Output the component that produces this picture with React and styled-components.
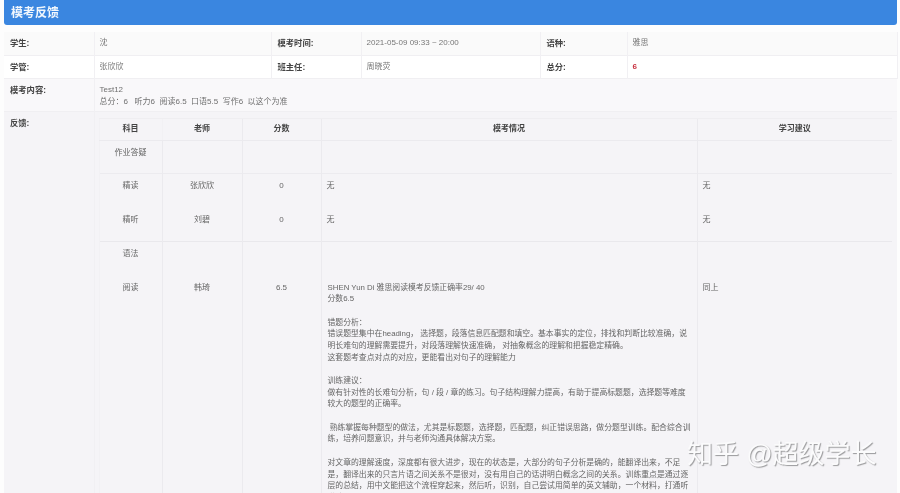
import React from 'react';
import styled, { createGlobalStyle } from 'styled-components';

const reportLines = [
    'SHEN Yun Di 雅思阅读模考反馈正确率29/ 40',
    '分数6.5',
    '',
    '错题分析：',
    '错误题型集中在heading， 选择题，段落信息匹配题和填空。基本事实的定位，排找和判断比较准确，说',
    '明长难句的理解需要提升，对段落理解快速准确， 对抽象概念的理解和把握稳定精确。',
    '这套题考查点对点的对应，更能看出对句子的理解能力',
    '',
    '训练建议：',
    '做有针对性的长难句分析，句 / 段 / 章的练习。句子结构理解力提高，有助于提高标题题，选择题等难度',
    '较大的题型的正确率。',
    '',
    ' 熟练掌握每种题型的做法，尤其是标题题，选择题，匹配题，纠正错误思路，做分题型训练。配合综合训',
    '练，培养问题意识，并与老师沟通具体解决方案。',
    '',
    '对文章的理解速度，深度都有很大进步，现在的状态是，大部分的句子分析是确的，能翻译出来，不足',
    '是，翻译出来的只言片语之间关系不是很对，没有用自己的话讲明白概念之间的关系。训练重点是通过逐',
    '层的总结，用中文能把这个流程穿起来，然后听，识别，自己尝试用简单的英文辅助，一个材料，打通听',
    '说读写。',
];

const rows = [
    { subject: '作业答疑', height: 33, line: '#ecebef' },
    { subject: '精读', teacher: '张欣欣', score: '0', report: '无', advice: '无', height: 34 },
    { subject: '精听', teacher: '刘碧', score: '0', report: '无', advice: '无', height: 34, line: '#e9e8ec' },
    { subject: '语法', height: 34 },
];

const App = () => {
    return (
        <Page>
            <GlobalStyle />
            <Header>模考反馈</Header>
            <InfoTable>
                <colgroup>
                    <col width="90" />
                    <col width="177" />
                    <col width="90" />
                    <col width="179" />
                    <col width="87" />
                    <col width="270" />
                </colgroup>
                <tbody>
                    <InfoRow $bg="#fafafa" $height={23}>
                        <Label>学生:</Label>
                        <Value>沈</Value>
                        <Label>模考时间:</Label>
                        <Value>2021-05-09 09:33 ~ 20:00</Value>
                        <Label>语种:</Label>
                        <Value>雅思</Value>
                    </InfoRow>
                    <InfoRow $bg="#ffffff" $height={23}>
                        <Label>学管:</Label>
                        <Value>张欣欣</Value>
                        <Label>班主任:</Label>
                        <Value>周晓荧</Value>
                        <Label>总分:</Label>
                        <Value><Total>6</Total></Value>
                    </InfoRow>
                    <InfoRow $bg="#f9f8fa" $height={33}>
                        <TopLabel>模考内容:</TopLabel>
                        <ContentCell colSpan={5}>
                            Test12
                            <br />
                            总分：6&nbsp;&nbsp;&nbsp;听力6&nbsp;&nbsp;阅读6.5&nbsp;&nbsp;口语5.5&nbsp;&nbsp;写作6&nbsp;&nbsp;以这个为准
                        </ContentCell>
                    </InfoRow>
                    <InfoRow $bg="#f5f4f7" $height={382}>
                        <TopLabel>反馈:</TopLabel>
                        <FeedbackCell colSpan={5}>
                            <ScoreTable>
                                <colgroup>
                                    <col width="63" />
                                    <col width="80" />
                                    <col width="79" />
                                    <col width="376" />
                                    <col width="195" />
                                </colgroup>
                                <thead>
                                    <tr>
                                        <HeadCell $faint>科目</HeadCell>
                                        <HeadCell $faint>老师</HeadCell>
                                        <HeadCell>分数</HeadCell>
                                        <HeadCell>模考情况</HeadCell>
                                        <HeadCell>学习建议</HeadCell>
                                    </tr>
                                </thead>
                                <tbody>
                                    {rows.map((row) => (
                                        <ScoreRow key={row.subject} $height={row.height} $line={row.line}>
                                            <CenterCell $faint>{row.subject}</CenterCell>
                                            <CenterCell>{row.teacher}</CenterCell>
                                            <CenterCell>{row.score}</CenterCell>
                                            <TextCell>{row.report}</TextCell>
                                            <TextCell>{row.advice}</TextCell>
                                        </ScoreRow>
                                    ))}
                                    <ScoreRow>
                                        <CenterCell $faint>阅读</CenterCell>
                                        <CenterCell>韩琦</CenterCell>
                                        <CenterCell>6.5</CenterCell>
                                        <ReportCell>
                                            {reportLines.map((line, i) => (
                                                <ReportLine key={i}>{line || '\u00a0'}</ReportLine>
                                            ))}
                                        </ReportCell>
                                        <TextCell>同上</TextCell>
                                    </ScoreRow>
                                </tbody>
                            </ScoreTable>
                        </FeedbackCell>
                    </InfoRow>
                </tbody>
            </InfoTable>
            <Watermark>知乎 @超级学长</Watermark>
        </Page>
    );
};

const GlobalStyle = createGlobalStyle`
    html, body {
        margin: 0;
        height: 493px;
        overflow: hidden;
        background: #fdfdfd;
    }
`;

const Page = styled.div`
    position: relative;
    width: 900px;
    height: 493px;
    overflow: hidden;
    box-sizing: border-box;
    padding: 0 3px 0 4px;
    font-family: "Liberation Sans", "Noto Sans CJK SC", sans-serif;
    font-size: 8px;
    line-height: 12px;
    color: #666;
    filter: blur(0.35px);
`;

const Header = styled.div`
    height: 25px;
    margin-bottom: 7px;
    padding-left: 7px;
    background: #3a86e0;
    border-radius: 0 0 3px 3px;
    color: #f1f7fd;
    font-size: 12px;
    font-weight: 700;
    line-height: 26px;
`;

const InfoTable = styled.table`
    width: 893px;
    table-layout: fixed;
    border-collapse: collapse;
`;

const InfoRow = styled.tr`
    height: ${(props) => props.$height}px;
    background: ${(props) => props.$bg};
    border-bottom: 1px solid #f0eff2;
`;

const Label = styled.td`
    padding: 0 0 0 6px;
    border-right: 1px solid #f1f0f3;
    color: #444;
    font-size: 8.3px;
    font-weight: 700;
`;

const TopLabel = styled(Label)`
    vertical-align: top;
    padding-top: 5px;
`;

const Value = styled.td`
    padding: 0 0 0 5px;
    border-right: 1px solid #f1f0f3;
    color: #777;
    white-space: nowrap;
`;

const Total = styled.span`
    color: #c8303f;
    font-weight: 700;
`;

const ContentCell = styled.td`
    padding: 5px 0 0 5px;
    vertical-align: top;
    color: #707070;
`;

const FeedbackCell = styled.td`
    padding: 6px 5px 0 4px;
    vertical-align: top;
`;

const ScoreTable = styled.table`
    width: 793px;
    table-layout: fixed;
    border-collapse: collapse;
`;

const HeadCell = styled.th`
    height: 21px;
    padding: 0;
    border-left: 1px solid ${(props) => (props.$faint ? '#f2f1f4' : '#ebeaee')};
    border-top: 1px solid #efeef1;
    border-bottom: 1px solid #ebeaee;
    color: #444;
    font-size: 8px;
    font-weight: 700;
    text-align: center;
`;

const ScoreRow = styled.tr`
    height: ${(props) => (props.$height ? `${props.$height}px` : 'auto')};
    border-bottom: 1px solid ${(props) => props.$line || 'transparent'};
`;

const CenterCell = styled.td`
    padding: 6px 0 0;
    border-left: 1px solid ${(props) => (props.$faint ? '#f2f1f4' : '#ebeaee')};
    color: #666;
    text-align: center;
    vertical-align: top;
`;

const TextCell = styled.td`
    padding: 6px 0 0 5px;
    border-left: 1px solid #ebeaee;
    color: #666;
    vertical-align: top;
`;

const ReportCell = styled(TextCell)`
    padding-left: 6px;
`;

const ReportLine = styled.div`
    height: 11.7px;
    font-size: 7.85px;
    line-height: 11.7px;
    white-space: pre;
`;

const Watermark = styled.div`
    position: absolute;
    left: 687px;
    top: 436px;
    color: #fbfbfc;
    font-size: 26px;
    line-height: 36px;
    white-space: nowrap;
    text-shadow: 1px 1px 1px #9a9a9c;
`;

export default App;
